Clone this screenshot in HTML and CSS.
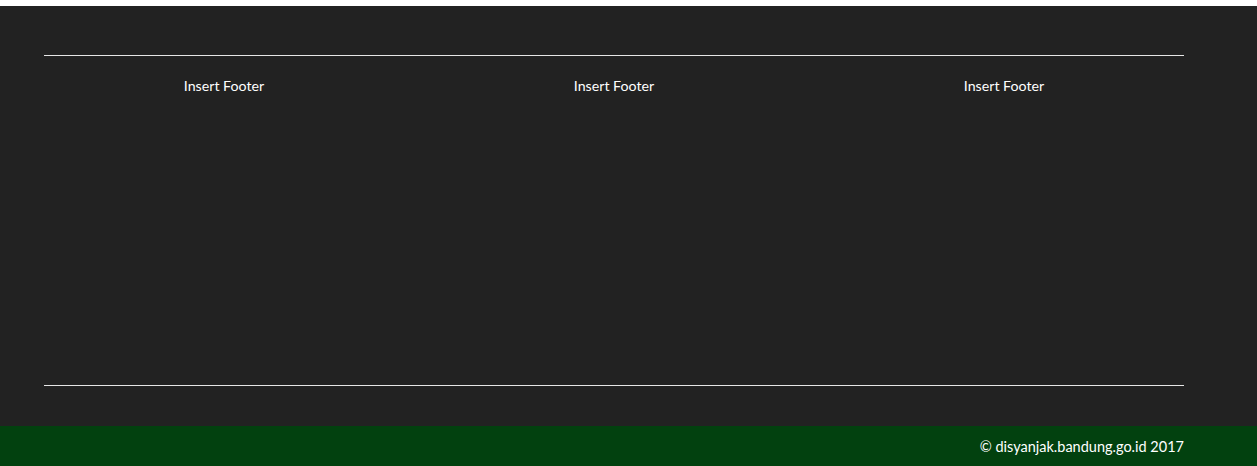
FILE: index.html
```html
<!DOCTYPE html>
<html>
<head>
<meta charset="utf-8">
<link rel="stylesheet" href="styles.css">
</head>
<body>
<div class="top-strip"></div>
<footer class="footer">
  <div class="container">
    <hr class="rule">
    <div class="row">
      <div class="col">Insert Footer</div>
      <div class="col">Insert Footer</div>
      <div class="col">Insert Footer</div>
    </div>
    <hr class="rule">
  </div>
</footer>
<div class="copyright">
  <div class="container copy-inner">© disyanjak.bandung.go.id 2017</div>
</div>
</body>
</html>
```

FILE: styles.css
```css
html, body {
  margin: 0;
  padding: 0;
  background: #ffffff;
  font-family: "Lato", "Open Sans", sans-serif;
}
.top-strip {
  height: 6px;
  background: #ffffff;
}
.footer {
  background: #222222;
  padding-top: 49px;
  padding-bottom: 40px;
}
.container {
  width: 1140px;
  margin-left: 44px;
}
.rule {
  margin: 0;
  border: 0;
  height: 1px;
  background: #e6e6e6;
}
.row {
  display: grid;
  grid-template-columns: repeat(3, 390px);
  margin-left: -15px;
  margin-right: -15px;
  height: 329px;
  box-sizing: border-box;
  padding-top: 20px;
}
.col {
  text-align: center;
  color: #ffffff;
  font-size: 14.2px;
  line-height: 20px;
  font-weight: 400;
}
.copyright {
  background: #02410f;
  height: 40px;
  overflow: hidden;
}
.copy-inner {
  text-align: right;
  color: #ffffff;
  font-size: 14.5px;
  font-weight: 400;
  line-height: 20px;
  padding-top: 11px;
}
```
